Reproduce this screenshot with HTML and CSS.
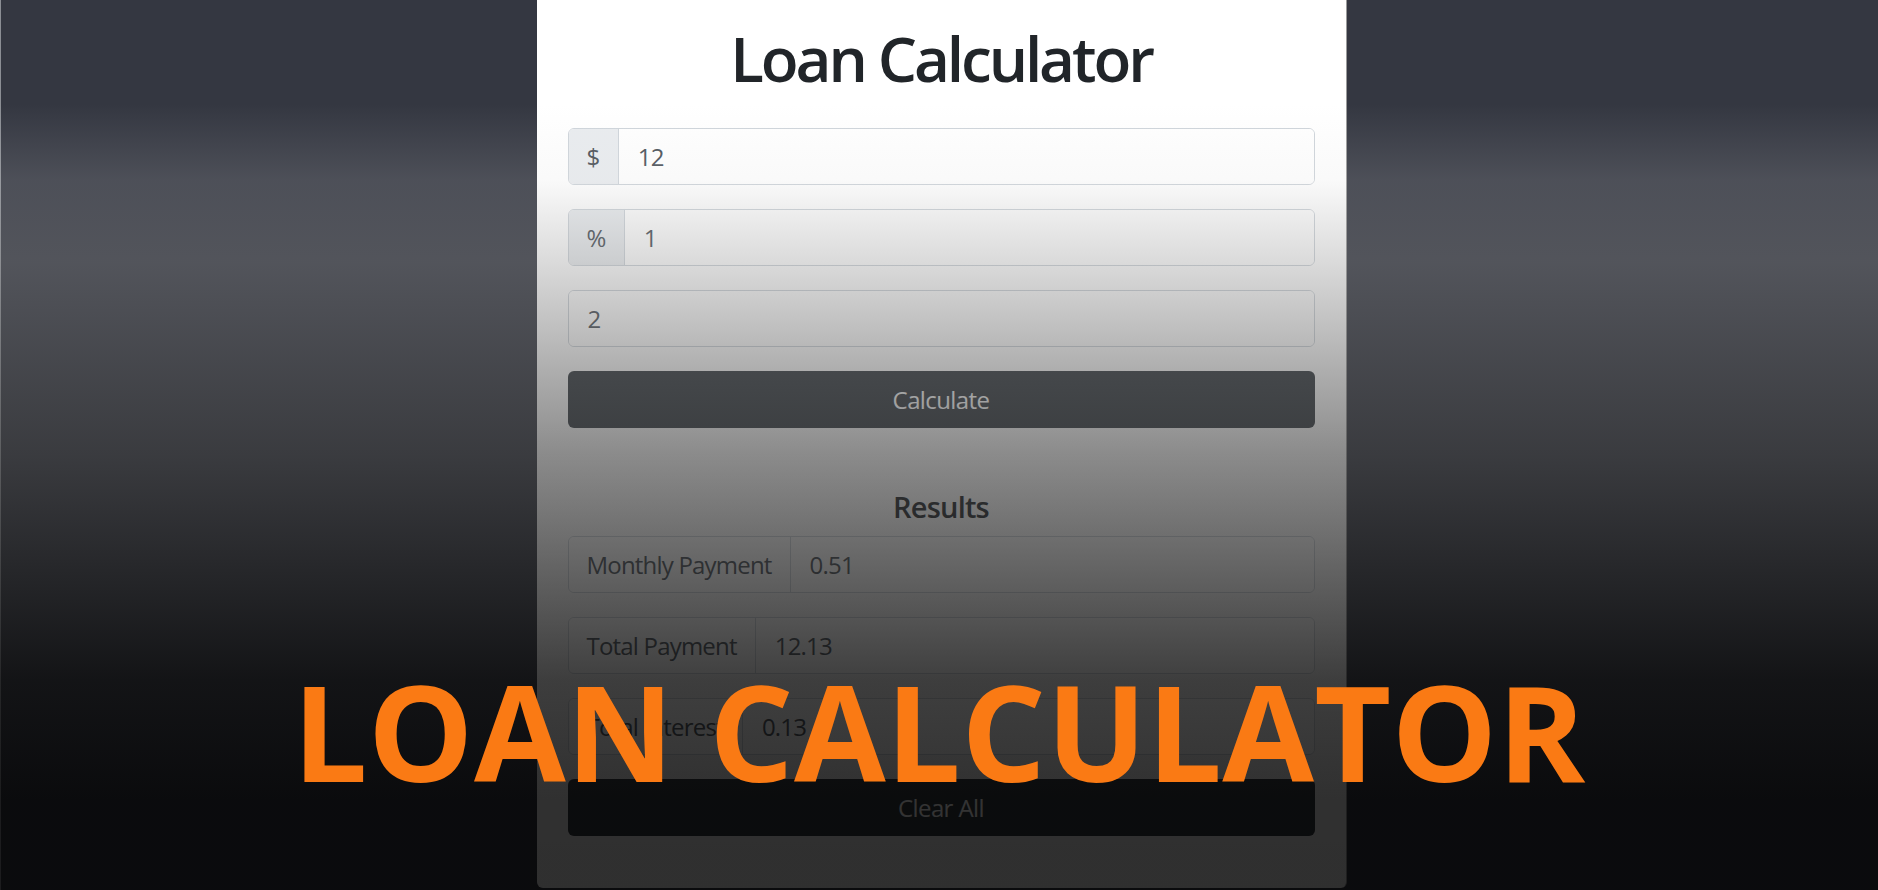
FILE: index.html
```html
<!DOCTYPE html>
<html lang="en">
<head>
<meta charset="utf-8">
<title>Loan Calculator</title>
<link rel="stylesheet" href="styles.css">
</head>
<body>
<main class="page">
  <section class="card">
    <h1 class="title">Loan Calculator</h1>
    <div class="calc">
      <div class="field">
        <span class="addon">$</span>
        <div class="control">12</div>
      </div>
      <div class="field">
        <span class="addon">%</span>
        <div class="control">1</div>
      </div>
      <div class="field">
        <div class="control">2</div>
      </div>
      <div class="btn btn-dark">Calculate</div>
    </div>
    <div class="results">
      <h5 class="results-title">Results</h5>
      <div class="field field-result">
        <span class="addon">Monthly Payment</span>
        <div class="control">0.51</div>
      </div>
      <div class="field field-result">
        <span class="addon">Total Payment</span>
        <div class="control">12.13</div>
      </div>
      <div class="field field-result">
        <span class="addon">Total Interest</span>
        <div class="control">0.13</div>
      </div>
      <div class="btn btn-dark">Clear All</div>
    </div>
  </section>
</main>
<div class="shade"></div>
<div class="banner">LOAN CALCULATOR</div>
</body>
</html>
```
FILE: styles.css
```css
html, body {
  margin: 0;
  padding: 0;
  height: 100%;
}
body {
  background: #343741;
  font-family: "Open Sans", "Liberation Sans", sans-serif;
  overflow: hidden;
  position: relative;
}
.page {
  height: 890px;
  border-left: 1px solid #8b8e94;
  display: flex;
  justify-content: center;
  box-sizing: border-box;
}
.card {
  width: 810px;
  box-sizing: border-box;
  background: linear-gradient(to bottom, #fff 0, #fff 420px, #ececec 888px);
  border-right: 1px solid #9a9a9a;
  border-radius: 0 0 6px 6px;
  padding: 21px 31px 52px 31px;
  height: 888px;
  margin-left: 4px;
}
.title {
  margin: 0 0 33px 0;
  font-size: 62px;
  line-height: 74px;
  font-weight: 600;
  color: #212529;
  text-align: center;
  letter-spacing: -3.1px;
}
.field {
  display: flex;
  height: 57px;
  box-sizing: border-box;
  border: 1px solid #ced4da;
  border-radius: 6px;
  margin-bottom: 24px;
  overflow: hidden;
  font-size: 24px;
  color: #495057;
  letter-spacing: -0.6px;
}
.addon {
  display: flex;
  align-items: center;
  padding: 0 18px;
  background: #e9ecef;
  border-right: 1px solid #ced4da;
  white-space: nowrap;
}
.control {
  flex: 1;
  display: flex;
  align-items: center;
  padding: 0 19px;
  background: #fff;
}
.field-result {
  letter-spacing: -0.8px;
}
.field-result .addon,
.field-result .control {
  background: #fbfbfb;
}
.btn {
  height: 57px;
  border-radius: 6px;
  display: flex;
  align-items: center;
  justify-content: center;
  font-size: 24px;
  letter-spacing: -0.6px;
}
.btn-dark {
  background: #343a40;
  color: #fff;
}
.results {
  margin-top: 61px;
}
.results-title {
  margin: 0 0 11px 0;
  font-size: 29px;
  line-height: 36px;
  font-weight: 600;
  color: #212529;
  text-align: center;
  letter-spacing: -0.8px;
}
.shade {
  position: absolute;
  inset: 0;
  pointer-events: none;
  background: linear-gradient(to bottom,
    rgba(220,220,220,0) 0px,
    rgba(220,220,220,0) 104px,
    rgba(220,220,220,0.15) 180px,
    rgba(144,144,144,0.33) 262px,
    rgba(62,62,62,0.6) 455px,
    rgba(10,10,10,0.78) 680px,
    rgba(0,0,0,0.8) 800px);
}
.banner {
  position: absolute;
  left: 0;
  right: 0;
  top: 664px;
  text-align: center;
  font-family: "Open Sans", "Liberation Sans", sans-serif;
  font-weight: 700;
  font-size: 133px;
  line-height: 133px;
  color: #fa7a14;
  white-space: nowrap;
  letter-spacing: 0.2px;
}
```
